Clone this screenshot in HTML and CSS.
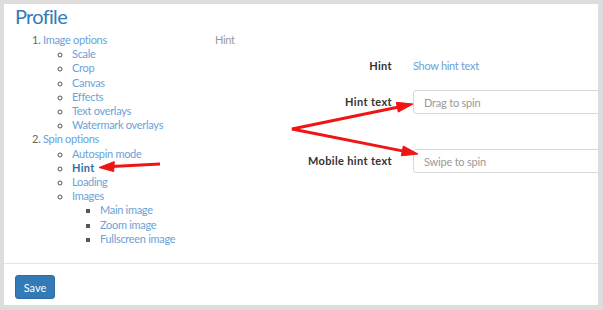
FILE: index.html
```html
<!DOCTYPE html>
<html lang="en">
<head>
  <meta charset="UTF-8" />
  <title>Profile - Hint</title>
  <link rel="stylesheet" href="styles.css">
</head>
<body>

  <div class="panel">
    <h1 class="title">Profile</h1>

    <div class="main">
      <nav class="toc">
        <ol>
          <li><a href="#">Image options</a>
            <ul>
              <li><a href="#">Scale</a></li>
              <li><a href="#">Crop</a></li>
              <li><a href="#">Canvas</a></li>
              <li><a href="#">Effects</a></li>
              <li><a href="#">Text overlays</a></li>
              <li><a href="#">Watermark overlays</a></li>
            </ul>
          </li>
          <li><a href="#">Spin options</a>
            <ul>
              <li><a href="#">Autospin mode</a></li>
              <li><a href="#" class="current">Hint</a></li>
              <li><a href="#">Loading</a></li>
              <li><a href="#">Images</a>
                <ul>
                  <li><a href="#">Main image</a></li>
                  <li><a href="#">Zoom image</a></li>
                  <li><a href="#">Fullscreen image</a></li>
                </ul>
              </li>
            </ul>
          </li>
        </ol>
      </nav>

      <section class="content">
        <div class="section-name">Hint</div>
        <div class="form">
          <div class="row row-first">
            <label>Hint</label>
            <a href="#" class="toggle">Show hint text</a>
          </div>
          <div class="row row-second">
            <label for="hint">Hint text</label>
            <input type="text" id="hint" placeholder="Drag to spin">
          </div>
          <div class="row row-third">
            <label for="mobile-hint">Mobile hint text</label>
            <input type="text" id="mobile-hint" placeholder="Swipe to spin">
          </div>
        </div>
      </section>
    </div>

    <div class="footer">
      <button type="button">Save</button>
    </div>
  </div>

  <svg class="arrows" width="603" height="310" viewBox="0 0 603 310">
    <g fill="#f01414" stroke="#f01414">
      <line x1="160" y1="164" x2="112" y2="166.5" stroke-width="3" />
      <polygon points="99,167.5 114.3,161.6 113.7,171.6" stroke-width="1" />
      <polyline points="397.5,107.2 292,129 402.3,150.9" fill="none" stroke-width="3" />
      <polygon points="413,104 398.3,112.1 396.3,102.3" stroke-width="1" />
      <polygon points="418,154 401.3,155.8 403.3,146" stroke-width="1" />
    </g>
  </svg>

</body>
</html>
```

FILE: styles.css
```css
:root {
  --link-color: #6ba2d8;
  --primary-color: #337ab7;
  --frame-color: #dddddd;
}
* {
  box-sizing: border-box;
}
body {
  margin: 0;
  padding: 4px 5px 5px 4px;
  background: var(--frame-color);
  font-family: 'Lato', sans-serif;
  font-size: 11px;
  letter-spacing: -0.3px;
  color: #333;
  position: relative;
}
a {
  color: var(--link-color);
  text-decoration: none;
}
.panel {
  background: white;
  overflow: hidden;
}
.title {
  margin: 0;
  padding-left: 11px;
  font-size: 20px;
  line-height: 24px;
  font-weight: 400;
  letter-spacing: -0.7px;
  color: var(--primary-color);
}
.main {
  display: flex;
  margin-top: 5px;
}
.toc {
  width: 211px;
  flex-shrink: 0;
  line-height: 14.2px;
}
.toc ol {
  margin: 0;
  padding-left: 39px;
  color: #666;
}
.toc ul {
  margin: 0;
  padding-left: 29px;
  list-style: circle;
  color: #555;
}
.toc ul ul {
  padding-left: 28px;
  list-style: square;
}
.toc .current {
  font-weight: 700;
  letter-spacing: 0.3px;
  color: #2f6ea8;
}
.content {
  flex: 1;
  line-height: 14px;
}
.section-name {
  color: #999;
}
.row {
  display: flex;
  align-items: center;
}
.row label {
  width: 177px;
  flex-shrink: 0;
  text-align: right;
  font-weight: 700;
  letter-spacing: 0.35px;
  color: #333;
  margin-right: 21px;
}
.row-first {
  margin-top: 12px;
}
.row-second {
  margin-top: 17px;
}
.row-third {
  margin-top: 35px;
}
.row input {
  flex: 1;
  height: 24px;
  margin-right: -10px;
  padding: 0 10px;
  border: 1px solid #d8d8d8;
  border-radius: 3px;
  font-family: inherit;
  font-size: 11px;
  letter-spacing: -0.2px;
  color: #555;
}
.row input::placeholder {
  color: #999;
}
.footer {
  margin-top: 17px;
  border-top: 1px solid #e5e5e5;
  padding: 11px 11px 6px;
}
.footer button {
  background: var(--primary-color);
  color: white;
  border: 1px solid #2e6da4;
  border-radius: 3px;
  height: 24px;
  width: 40px;
  padding: 0;
  font-family: inherit;
  font-size: 11px;
  cursor: pointer;
}
.arrows {
  position: absolute;
  top: 0;
  left: 0;
  pointer-events: none;
}
```
